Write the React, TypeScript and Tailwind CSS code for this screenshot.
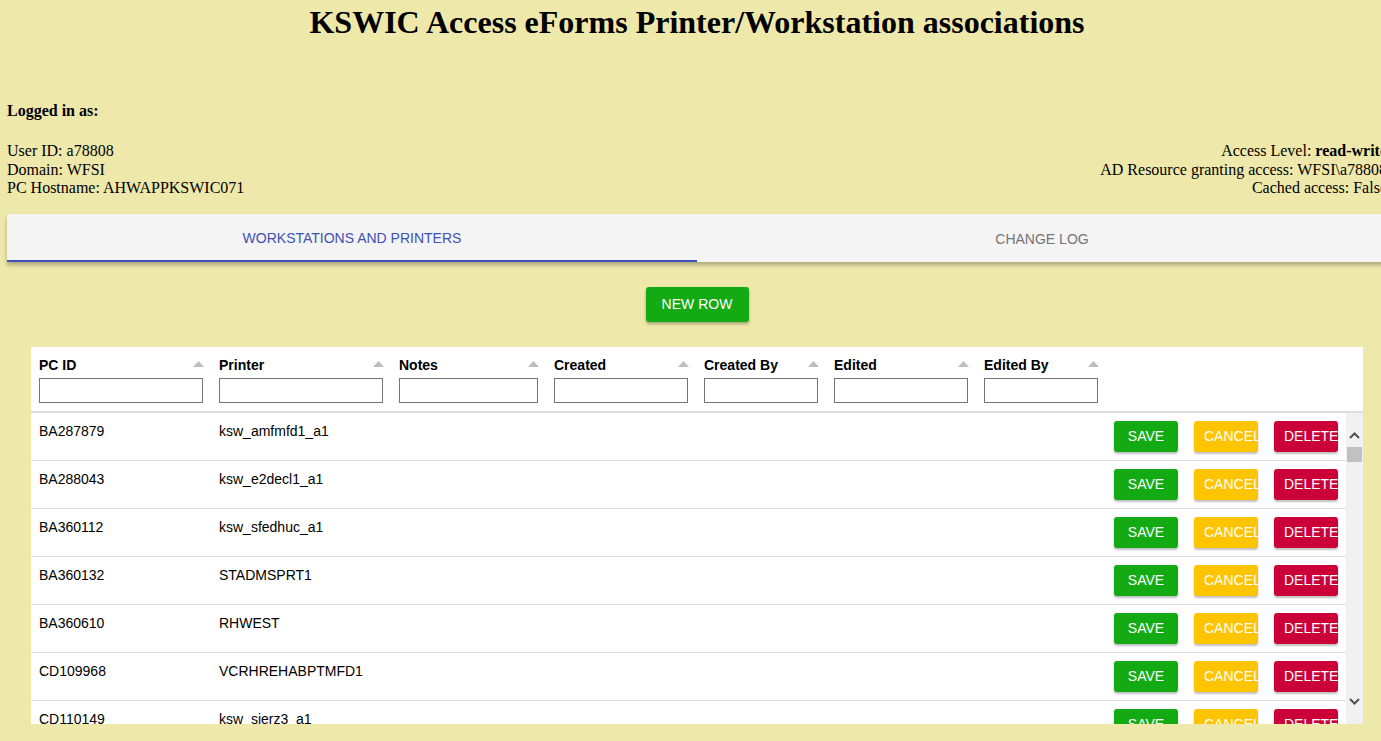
import React from "react";

type Row = { pc: string; printer: string };

const rows: Row[] = [
  { pc: "BA287879", printer: "ksw_amfmfd1_a1" },
  { pc: "BA288043", printer: "ksw_e2decl1_a1" },
  { pc: "BA360112", printer: "ksw_sfedhuc_a1" },
  { pc: "BA360132", printer: "STADMSPRT1" },
  { pc: "BA360610", printer: "RHWEST" },
  { pc: "CD109968", printer: "VCRHREHABPTMFD1" },
  { pc: "CD110149", printer: "ksw_sierz3_a1" },
];

const columns = [
  { label: "PC ID", width: "w-[180px]" },
  { label: "Printer", width: "w-[180px]" },
  { label: "Notes", width: "w-[155px]" },
  { label: "Created", width: "w-[150px]" },
  { label: "Created By", width: "w-[130px]" },
  { label: "Edited", width: "w-[150px]" },
  { label: "Edited By", width: "w-[130px]" },
];

function SortArrow() {
  return (
    <svg width="11" height="6" viewBox="0 0 11 6" className="absolute right-[7px] top-[14px]">
      <path d="M0 6 L5.5 0 L11 6 Z" fill="#bdbdbd" />
    </svg>
  );
}

function ActionButton({ label, color }: { label: string; color: string }) {
  return (
    <button
      className={`block h-[31px] w-[64px] overflow-hidden whitespace-nowrap rounded-[3px] px-[10px] text-center text-[14px] uppercase text-white shadow-[0_2px_2px_rgba(0,0,0,0.25)] ${color}`}
    >
      {label}
    </button>
  );
}

export default function App() {
  return (
    <div
      className="h-[741px] w-full overflow-hidden bg-[#eee8aa] text-black"
      style={{ fontFamily: '"Liberation Serif", "Times New Roman", serif' }}
    >
      <div className="ml-[7px] w-[1380px]">
        <h1 className="pt-[4px] text-center text-[32px] font-bold leading-[37px]">
          KSWIC Access eForms Printer/Workstation associations
        </h1>

        <div className="mt-[61px] text-[16px] font-bold leading-[18px]">Logged in as:</div>

        <div className="mt-[22px] flex justify-between text-[16px] leading-[18.5px]">
          <div>
            <div>User ID: a78808</div>
            <div>Domain: WFSI</div>
            <div>PC Hostname: AHWAPPKSWIC071</div>
          </div>
          <div className="text-right">
            <div>
              Access Level: <b>read-write</b>
            </div>
            <div>AD Resource granting access: WFSI\a78808</div>
            <div>Cached access: False</div>
          </div>
        </div>

        <div style={{ fontFamily: '"Liberation Sans", Arial, sans-serif' }}>
          <div className="mt-[16px] flex h-[48px] bg-[#f4f4f4] shadow-[0_3px_4px_rgba(0,0,0,0.28)]">
            <div className="flex flex-1 items-center justify-center border-b-2 border-[#3f51b5] pt-[4px] text-[14px] text-[#3f51b5]">
              WORKSTATIONS AND PRINTERS
            </div>
            <div className="flex flex-1 items-center justify-center pt-[4px] text-[14px] text-[#757575]">
              CHANGE LOG
            </div>
          </div>

          <div className="mt-[25px] flex justify-center">
            <button className="h-[35px] w-[103px] rounded-[3px] bg-[#13aa13] text-[14px] text-white shadow-[0_2px_3px_rgba(0,0,0,0.3)]">
              NEW ROW
            </button>
          </div>

          <div className="mx-6 mt-[25px] bg-white">
            <div className="flex h-[66px] border-b-2 border-[#dddddd]">
              {columns.map((c) => (
                <div key={c.label} className={`relative ${c.width} px-2 pt-[10px]`}>
                  <div className="text-[14px] font-bold leading-[17px]">{c.label}</div>
                  <SortArrow />
                  <input className="mt-[4px] h-[25px] w-full border border-[#767676] bg-white outline-none" />
                </div>
              ))}
            </div>

            <div className="flex h-[311px] overflow-hidden">
              <div className="flex-1">
                {rows.map((r) => (
                  <div key={r.pc} className="flex h-[48px] border-b border-[#e0e0e0] text-[14px]">
                    <div className="w-[180px] px-2 pt-[8px]">{r.pc}</div>
                    <div className="w-[180px] px-2 pt-[8px]">{r.printer}</div>
                    <div className="w-[155px]" />
                    <div className="w-[150px]" />
                    <div className="w-[130px]" />
                    <div className="w-[150px]" />
                    <div className="w-[130px]" />
                    <div className="flex gap-4 px-2 pt-[8px]">
                      <ActionButton label="Save" color="bg-[#13aa13]" />
                      <ActionButton label="Cancel" color="bg-[#ffc400]" />
                      <ActionButton label="Delete" color="bg-[#cc0038]" />
                    </div>
                  </div>
                ))}
              </div>
              <div className="flex w-[17px] flex-col bg-[#f1f1f1]">
                <div className="mt-[14px] flex h-[17px] items-center justify-center">
                  <svg width="11" height="7" viewBox="0 0 11 7">
                    <path d="M1 6 L5.5 1.5 L10 6" stroke="#505050" strokeWidth="2" fill="none" />
                  </svg>
                </div>
                <div className="mx-[1px] mt-[3px] h-[15px] bg-[#c1c1c1]" />
                <div className="flex-1" />
                <div className="mb-[14px] flex h-[17px] items-center justify-center">
                  <svg width="11" height="7" viewBox="0 0 11 7">
                    <path d="M1 1 L5.5 5.5 L10 1" stroke="#505050" strokeWidth="2" fill="none" />
                  </svg>
                </div>
              </div>
            </div>
          </div>
        </div>
      </div>
    </div>
  );
}
